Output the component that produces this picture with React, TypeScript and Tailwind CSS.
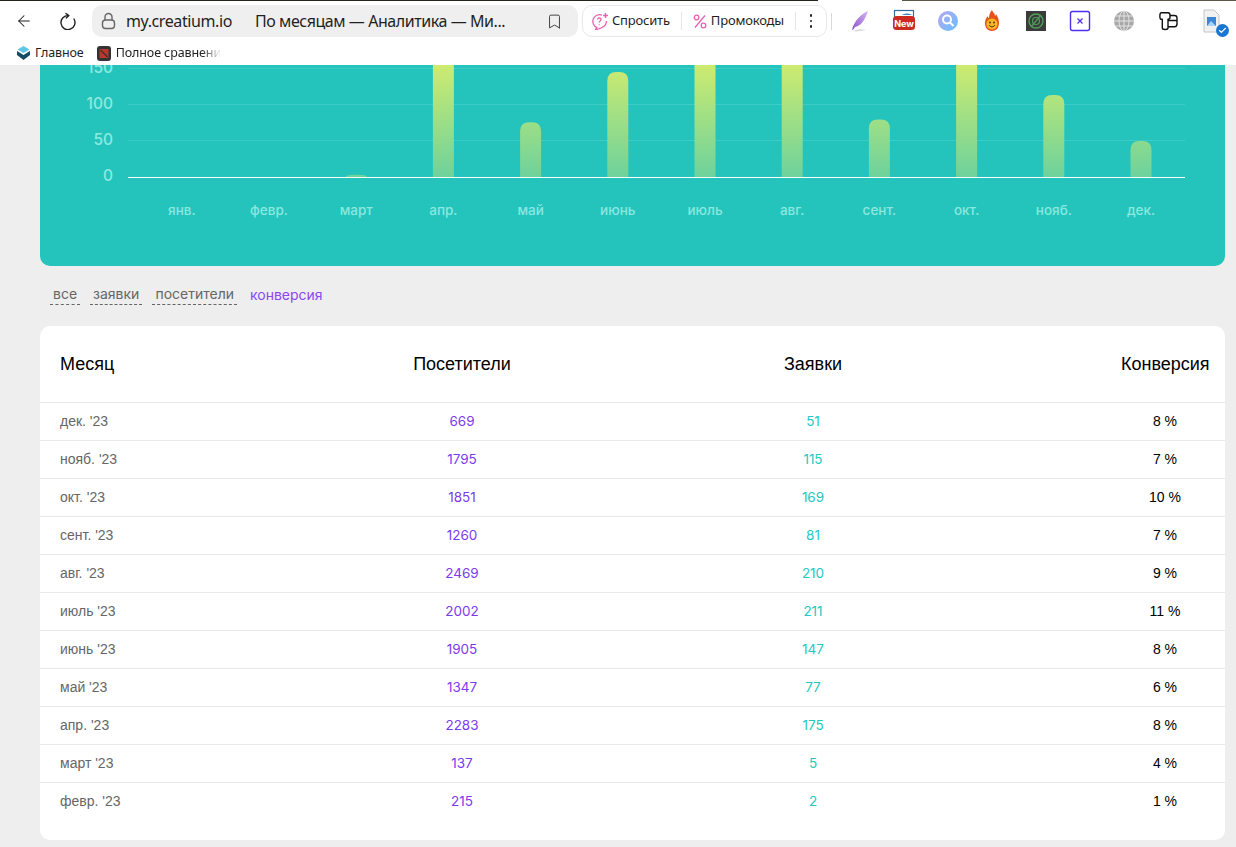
import React from 'react';
import { ArrowLeft, Bookmark, Check } from 'lucide-react';

const rows = [
  { month: "дек. '23", visitors: 669, orders: 51, conv: '8 %' },
  { month: "нояб. '23", visitors: 1795, orders: 115, conv: '7 %' },
  { month: "окт. '23", visitors: 1851, orders: 169, conv: '10 %' },
  { month: "сент. '23", visitors: 1260, orders: 81, conv: '7 %' },
  { month: "авг. '23", visitors: 2469, orders: 210, conv: '9 %' },
  { month: "июль '23", visitors: 2002, orders: 211, conv: '11 %' },
  { month: "июнь '23", visitors: 1905, orders: 147, conv: '8 %' },
  { month: "май '23", visitors: 1347, orders: 77, conv: '6 %' },
  { month: "апр. '23", visitors: 2283, orders: 175, conv: '8 %' },
  { month: "март '23", visitors: 137, orders: 5, conv: '4 %' },
  { month: "февр. '23", visitors: 215, orders: 2, conv: '1 %' },
];

const months = [
  { label: 'янв.', value: 0 },
  { label: 'февр.', value: 0 },
  { label: 'март', value: 3 },
  { label: 'апр.', value: 175 },
  { label: 'май', value: 76 },
  { label: 'июнь', value: 146 },
  { label: 'июль', value: 211 },
  { label: 'авг.', value: 210 },
  { label: 'сент.', value: 80 },
  { label: 'окт.', value: 169 },
  { label: 'нояб.', value: 114 },
  { label: 'дек.', value: 50 },
];

function Chart() {
  const base = 177;
  return (
    <svg viewBox="40 65 1185 201" className="block w-full h-full" style={{ fontFamily: 'Inter, sans-serif' }}>
      <defs>
        <linearGradient id="bar" gradientUnits="userSpaceOnUse" x1="0" y1="65" x2="0" y2="177">
          <stop offset="0" stopColor="#cdeb70" />
          <stop offset="1" stopColor="#6dd29c" />
        </linearGradient>
      </defs>
      {[68, 104, 140].map((y) => (
        <line key={y} x1="128" x2="1185" y1={y + 0.5} y2={y + 0.5} stroke="#ffffff" strokeOpacity="0.12" />
      ))}
      {[
        ['150', 73],
        ['100', 109],
        ['50', 145],
        ['0', 181],
      ].map(([t, y]) => (
        <text key={t} x="113" y={y} textAnchor="end" fontSize="15.5" fontWeight="500" fill="#8ceae0">
          {t}
        </text>
      ))}
      {months.map((m, i) => {
        const cx = 181.8 + i * 87.2;
        const h = m.value * 0.72;
        return (
          <g key={m.label}>
            {h > 0 && (
              <path
                d={`M${cx - 10.5} ${base} V${base - h + Math.min(h, 9)} Q${cx - 10.5} ${base - h} ${cx - 1.5} ${base - h} H${cx + 1.5} Q${cx + 10.5} ${base - h} ${cx + 10.5} ${base - h + Math.min(h, 9)} V${base} Z`}
                fill="url(#bar)"
              />
            )}
            <text x={cx} y="215" textAnchor="middle" fontSize="13.5" fontWeight="500" fill="#8ae8df">
              {m.label}
            </text>
          </g>
        );
      })}
      <line x1="128" x2="1185" y1="177.5" y2="177.5" stroke="#ffffff" strokeWidth="1" />
    </svg>
  );
}

function Sep() {
  return <div className="w-px h-[18px] bg-[#e6e6e6]" />;
}

function ExtensionIcons() {
  return (
    <div className="flex items-center gap-5 ml-[16px]">
      <svg width="24" height="24" viewBox="0 0 24 24">
        <defs>
          <linearGradient id="feather" x1="1" y1="0" x2="0" y2="1">
            <stop offset="0" stopColor="#d6b8f2" />
            <stop offset="1" stopColor="#8a4fc9" />
          </linearGradient>
        </defs>
        <path d="M20 2C13 5 6 12 4 21c1 0 2-1 3-3 5-1 10-6 13-16Z" fill="url(#feather)" />
        <path d="M5 22c4-2 9-2 13-1-4 1-9 2-13 1Z" fill="#dcdcdc" />
      </svg>
      <svg width="24" height="24" viewBox="0 0 24 24">
        <rect x="2.5" y="1.500" width="19" height="9" fill="#fff" stroke="#2f6e9e" strokeWidth="1.2" />
        <path d="M10 6c3-2 7-2 10 0Z" fill="#3f88bf" />
        <rect x="1" y="7" width="22" height="14" rx="3.5" fill="#cc2a20" />
        <text x="12" y="18" textAnchor="middle" fontSize="9" fontWeight="700" fill="#fff" style={{ fontFamily: 'Inter, sans-serif' }}>New</text>
      </svg>
      <svg width="24" height="24" viewBox="0 0 24 24">
        <defs>
          <linearGradient id="sphere" x1="0" y1="0" x2="1" y2="1">
            <stop offset="0" stopColor="#b6a6ee" />
            <stop offset="1" stopColor="#66c0ff" />
          </linearGradient>
        </defs>
        <circle cx="12" cy="12" r="10" fill="url(#sphere)" />
        <circle cx="11" cy="10.5" r="4" fill="none" stroke="#fff" strokeWidth="2" />
        <path d="M14 13.500l3.500 3.500" stroke="#fff" strokeWidth="2" />
      </svg>
      <svg width="24" height="24" viewBox="0 0 24 24">
        <path d="M12 1c1 3 3 3 3 6 1-1 1-2 1-2 2 3 3 6 3 9 0 5-3 8-7 8s-7-3-7-8c0-3 1-5 3-7 0 1 0 2 1 2 0-3 1-6 3-8Z" fill="#e8501e" />
        <circle cx="12" cy="15" r="5.6" fill="#f8b724" />
        <circle cx="10" cy="13.500" r="0.9" fill="#4a2a00" />
        <circle cx="14" cy="13.500" r="0.9" fill="#4a2a00" />
        <path d="M9 16c1.500 2.400 4.500 2.400 6 0" fill="none" stroke="#4a2a00" strokeWidth="1" />
      </svg>
      <svg width="24" height="24" viewBox="0 0 24 24">
        <rect x="2" y="2" width="20" height="20" fill="#3b3b3b" />
        <circle cx="12" cy="12" r="7" fill="none" stroke="#4f9e58" strokeWidth="1.4" />
        <circle cx="12" cy="12" r="3.5" fill="none" stroke="#4f9e58" strokeWidth="1.2" />
        <path d="M7 18L17 6" stroke="#4f9e58" strokeWidth="1.2" />
      </svg>
      <svg width="24" height="24" viewBox="0 0 24 24">
        <rect x="2.500" y="2.500" width="19" height="19" rx="2" fill="#fff" stroke="#4f2ff0" strokeWidth="1.4" />
        <path d="M9.500 9.500l5 5M14.500 9.500l-5 5" stroke="#4f2ff0" strokeWidth="1.3" />
      </svg>
      <svg width="24" height="24" viewBox="0 0 24 24">
        <circle cx="12" cy="12" r="10" fill="#a8a8a8" />
        <path d="M2 12h20M3.500 7h17M3.500 17h17M12 2v20" stroke="#e4e4e4" strokeWidth="1" />
        <ellipse cx="12" cy="12" rx="5" ry="10" fill="none" stroke="#e4e4e4" strokeWidth="1" />
      </svg>
      <svg width="24" height="24" viewBox="0 0 24 24" fill="none" stroke="#111" strokeWidth="1.4" strokeLinejoin="round">
        <path d="M5 3.700h7c1.500 0 2 1 2 2.500v2c0 1.500-1 2.100-2 2.100v8.700c0 2-5.700 2-5.700 0V10.300H5C3.500 10.300 3.500 3.700 5 3.700Z" />
        <path d="M14 6.500h4.500c1.500 0 2.500 1 2.500 2.500v6c0 1.700-1 2.700-2.500 2.700H12M12 11.500h9" />
      </svg>
      <div className="relative w-6 h-6">
        <svg width="24" height="24" viewBox="0 0 24 24">
          <path d="M4 1h10l5 5v17H4Z" fill="#f1f1f1" stroke="#c6c6c6" />
          <rect x="7" y="8" width="9" height="9" fill="#3c86d8" />
          <path d="M7 17l4-5 5 5Z" fill="#a9d3f6" />
        </svg>
        <span className="absolute -right-[5px] -bottom-[4px] w-[13px] h-[13px] rounded-full bg-[#1976d2] flex items-center justify-center">
          <Check size={9} strokeWidth={3} className="text-white" />
        </span>
      </div>
    </div>
  );
}

function BrowserBar() {
  return (
    <div className="h-[65px] bg-white text-[#1f1f1f]" style={{ fontFamily: '"Noto Sans", sans-serif' }}>
      <div className="flex h-px">
        <div className="w-[818px] bg-[#23241c]" />
        <div className="w-[84px] bg-white" />
        <div className="flex-1 bg-[#5c5546]" />
      </div>
      <div className="flex items-center h-[32px] mt-[4px]">
        <div className="w-[92px] flex items-center pl-[15px] gap-[26px] shrink-0">
          <ArrowLeft size={18} strokeWidth={1.4} />
          <svg width="18" height="18" viewBox="0 0 18 18" fill="none" stroke="#1f1f1f" strokeWidth="1.4" strokeLinecap="round" strokeLinejoin="round">
            <path d="M7 1.500L9.800 3.600 7.300 6" />
            <path d="M9.500 3.600A7 7 0 1 0 15 7" />
          </svg>
        </div>
        <div className="w-[486px] h-[32px] rounded-[10px] bg-[#efefef] flex items-center pl-[9px] shrink-0">
          <svg width="15" height="18" viewBox="0 0 15 18" fill="none" stroke="#666666" strokeWidth="1.4">
            <path d="M4 8V5a3.500 3.500 0 0 1 7 0v3" />
            <rect x="1.500" y="8" width="12" height="8.500" rx="3" />
          </svg>
          <span className="ml-[10px] text-[16px] leading-none w-[129px] shrink-0 tracking-[-0.4px]">my.creatium.io</span>
          <span className="text-[16px] leading-none whitespace-nowrap tracking-[-0.43px]">По месяцам — Аналитика — Ми...</span>
          <Bookmark size={17} strokeWidth={1.4} className="ml-auto mr-[15px] text-[#444444]" />
        </div>
        <div className="ml-[4px] w-[245px] h-[32px] rounded-[10px] border border-[#e8e8e8] flex items-center pl-[8px] shrink-0 text-[13px] tracking-[-0.2px]">
          <svg width="18" height="18" viewBox="0 0 18 18" fill="none" stroke="#ee5fb0" strokeWidth="1.3" strokeLinejoin="round">
            <path d="M11 3.200A6.500 6.500 0 1 0 6 15.500L4.500 17.500C7 17.500 9 16.500 11 15.500 14 14 15.500 12 15.500 9" />
            <path d="M6.500 7.500c.3-2 3.500-2 3.500 0 0 1.500-1.800 1.300-1.800 3M8.200 12.300v.8" />
            <path d="M14.500 1v5M12 3.500h5" strokeWidth="1.500" />
          </svg>
          <span className="ml-[3px]">Спросить</span>
          <div className="ml-[11px]"><Sep /></div>
          <svg className="ml-[11px] shrink-0" width="14" height="15" viewBox="0 0 14 15" fill="none" stroke="#ee5fb0" strokeWidth="1.3">
            <circle cx="3.500" cy="3.500" r="2.300" />
            <circle cx="10.500" cy="11.500" r="2.300" />
            <path d="M12 1.500L2 13.500" />
          </svg>
          <span className="ml-[4px]">Промокоды</span>
          <div className="ml-[11px]"><Sep /></div>
          <div className="ml-[14px] flex flex-col gap-[3px]">
            <span className="w-[2.500px] h-[2.500px] rounded-full bg-[#222222]" />
            <span className="w-[2.500px] h-[2.500px] rounded-full bg-[#222222]" />
            <span className="w-[2.500px] h-[2.500px] rounded-full bg-[#222222]" />
          </div>
        </div>
        <div className="ml-[4px] w-px h-[17px] bg-[#d9d9d9]" />
        <ExtensionIcons />
      </div>
      <div className="flex items-center h-[28px] pt-[4px] pl-[16px] text-[12.500px] tracking-[-0.1px]">
        <svg width="15" height="14" viewBox="0 0 15 14">
          <path d="M7.500 0l6 3.500-6 3.500-6-3.500Z" fill="#5ec7e6" />
          <path d="M1 5l6.500 4L14 5v4l-6.500 5L1 9Z" fill="#174b63" />
        </svg>
        <span className="ml-[4px]">Главное</span>
        <svg className="ml-[13px]" width="14" height="15" viewBox="0 0 14 15">
          <rect width="14" height="15" rx="3" fill="#333333" />
          <rect x="2.500" y="3" width="9" height="9" fill="#b9392a" />
          <path d="M3.500 4l7 7" stroke="#333333" strokeWidth="1.200" />
        </svg>
        <span
          className="ml-[5px] whitespace-nowrap"
          style={{ maskImage: 'linear-gradient(to right, #000 82%, transparent)' }}
        >
          Полное сравнени
        </span>
      </div>
    </div>
  );
}

export default function App() {
  return (
    <div className="h-[847px] w-[1236px] overflow-hidden bg-[#eeeeee]" style={{ fontFamily: 'Inter, sans-serif' }}>
      <BrowserBar />
      <div className="pl-[40px] pr-[11px]">
        {/* Chart */}
        <div className="h-[201px] rounded-b-[10px] bg-[#24c4bd] overflow-hidden">
          <Chart />
        </div>

        {/* Filters */}
        <div className="flex items-center gap-[10px] h-[60px] pb-[4px] pl-[10px] text-[14px] text-[#666666]">
          <span className="px-[3px] border-b border-dashed border-[#666666]">все</span>
          <span className="px-[3px] border-b border-dashed border-[#666666]">заявки</span>
          <span className="px-[3px] border-b border-dashed border-[#666666]">посетители</span>
          <span className="px-[3px] text-[#8a46f0]">конверсия</span>
        </div>

        {/* Table */}
        <div className="rounded-[10px] bg-white pb-[19px]" style={{ fontFamily: '"Liberation Sans", sans-serif' }}>
          <div className="grid grid-cols-[247px_350px_352px_1fr] items-center h-[77px] border-b border-[#e8e8e8] text-[18px] text-black">
            <div className="pl-[20px]">Месяц</div>
            <div className="text-center">Посетители</div>
            <div className="text-center">Заявки</div>
            <div className="pl-[132px] whitespace-nowrap">Конверсия</div>
          </div>
          {rows.map((r, i) => (
            <div
              key={r.month}
              className={`grid grid-cols-[247px_350px_352px_1fr] items-center h-[38px] pb-[1px] text-[14px] ${i < rows.length - 1 ? 'border-b border-[#e8e8e8]' : ''}`}
            >
              <div className="pl-[20px] text-[#666666]">{r.month}</div>
              <div className="text-center text-[13.500px] text-[#7c3aed]" style={{ fontFamily: 'Inter, sans-serif' }}>{r.visitors}</div>
              <div className="text-center text-[13.500px] text-[#22c9c1]" style={{ fontFamily: 'Inter, sans-serif' }}>{r.orders}</div>
              <div className="pl-[116px] text-center text-black">{r.conv}</div>
            </div>
          ))}
        </div>
      </div>
    </div>
  );
}
